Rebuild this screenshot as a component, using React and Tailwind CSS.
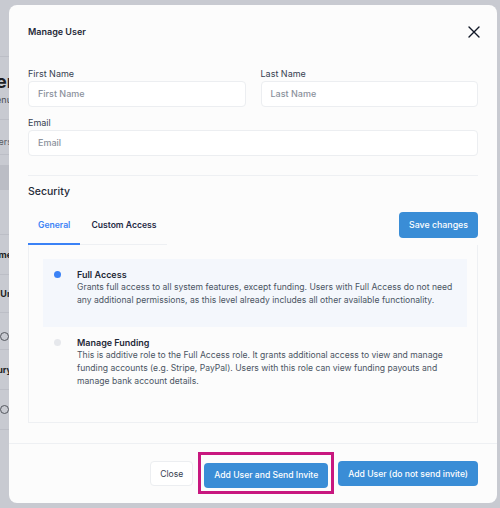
import React from "react";

function BgRow({ h, text, cls = "", border = true, band = false, icon = false }) {
  return (
    <div
      className={`flex items-center justify-end overflow-hidden whitespace-nowrap w-[12px] ${border ? "border-b border-[#bcbec6]" : ""} ${band ? "bg-[#bbbdc5]" : ""} ${cls}`}
      style={{ height: h }}
    >
      {icon ? (
        <span className="inline-block w-[9px] h-[9px] rounded-full border border-[#55585f] mr-[3px]"></span>
      ) : (
        text
      )}
    </div>
  );
}

function Field({ label, placeholder, className = "" }) {
  return (
    <div className={`flex flex-col ${className}`}>
      <label className="text-[9px] leading-[13px] text-[#374151] h-[13px]">{label}</label>
      <div className="mt-[0.5px] h-[26px] rounded-[4px] border border-[#eceef1] bg-white flex items-center pl-[9px] text-[9px] font-medium text-[#8b919c]">
        {placeholder}
      </div>
    </div>
  );
}

function Item({ active, title, children }) {
  return (
    <div className={`flex pt-[9px] pb-[20px] pl-[11px] pr-[10px] ${active ? "bg-[#f4f7fc]" : ""}`}>
      <div className="w-[23px] shrink-0 flex items-start pt-[3.5px]">
        <span className={`block w-[7px] h-[7px] rounded-full ${active ? "bg-[#3b82f6]" : "bg-[#e6e8ec]"}`}></span>
      </div>
      <div className="flex flex-col">
        <div className="text-[9px] leading-[13px] font-semibold text-[#1f2937]">{title}</div>
        <div className="text-[8.6px] leading-[13px] text-[#4b5563] whitespace-nowrap">{children}</div>
      </div>
    </div>
  );
}

export default function App() {
  return (
    <div className="relative w-[500px] h-[508px] overflow-hidden bg-[#c8cad1] font-['Inter',sans-serif]">
      {/* background page peeking on the left */}
      <div className="flex flex-col text-[#1c1d22]">
        <BgRow h={57} text="" />
        <BgRow h={63} border text={
          <div className="flex flex-col items-end">
            <span className="text-[18px] font-bold leading-[22px] mr-[-2px]">Member</span>
            <span className="text-[9px] leading-[12px] text-[#4a4c52] mt-[1px]">Menu</span>
          </div>
        } />
        <BgRow h={35} cls="!items-end pb-[6px]" text={<span className="text-[9px] leading-[12px] text-[#5a5c63]">Members</span>} />
        <BgRow h={10} text="" border={false} />
        <BgRow h={25} text="" band border={false} />
        <BgRow h={45} text="" />
        <BgRow h={40} text={<span className="text-[9px] font-bold">Name</span>} />
        <BgRow h={38} text={<span className="text-[9px] font-bold mr-[-3px]">Uni</span>} />
        <BgRow h={37} cls="!items-end pb-[8px]" icon />
        <BgRow h={40} text={<span className="text-[9px] font-bold">Treasury</span>} />
        <BgRow h={40} icon />
      </div>

      {/* modal */}
      <div className="absolute left-[9px] top-[5px] w-[488px] h-[498px] rounded-[8px] bg-[#fcfcfc] flex flex-col">
        <div className="flex items-center justify-between px-[19px] pt-[20px] h-[33px]">
          <span className="text-[9px] leading-[13px] font-semibold text-[#1f2937]">Manage User</span>
          <svg width="12" height="12" viewBox="0 0 12 12" className="mr-[-2px]">
            <path d="M1 1L11 11M11 1L1 11" stroke="#111827" strokeWidth="1.4" strokeLinecap="round" />
          </svg>
        </div>

        <div className="px-[19px] flex flex-col">
          <div className="flex gap-[15px] mt-[29px]">
            <Field className="flex-1" label="First Name" placeholder="First Name" />
            <Field className="flex-1" label="Last Name" placeholder="Last Name" />
          </div>
          <Field className="mt-[9.5px]" label="Email" placeholder="Email" />

          <div className="mt-[19px] border-t border-[#eef0f3]"></div>

          <div className="mt-[9px] text-[10.5px] leading-[14px] font-medium text-[#1f2937]">Security</div>

          <div className="flex items-end justify-between mt-[8px]">
            <div className="flex border-b border-[#eef0f3]">
              <div className="px-[10px] pt-[12px] pb-[11px] leading-[13px] text-[8.6px] font-semibold text-[#3b82f6] border-b-2 border-[#3b82f6] mb-[-1px]">
                General
              </div>
              <div className="px-[11px] pt-[12px] pb-[11px] leading-[13px] text-[8.6px] font-semibold text-[#1f2a44] border-b-2 border-transparent mb-[-1px]">
                Custom Access
              </div>
            </div>
            <button className="mb-[7px] h-[26px] px-[10px] rounded-[4px] bg-[#3a8dd6] text-white text-[8.8px] font-medium">
              Save changes
            </button>
          </div>

          <div className="border-l border-r border-b border-[#eef0f3] pl-[14px] pr-[10px] pt-[14px] pb-[14px] flex flex-col">
            <Item active title="Full Access">
              Grants full access to all system features, except funding. Users with Full Access do not need
              <br />
              any additional permissions, as this level already includes all other available functionality.
            </Item>
            <Item title="Manage Funding">
              This is additive role to the Full Access role. It grants additional access to view and manage
              <br />
              funding accounts (e.g. Stripe, PayPal). Users with this role can view funding payouts and
              <br />
              manage bank account details.
            </Item>
          </div>
        </div>

        <div className="mt-[20px] border-t border-[#eef0f3]"></div>

        <div className="flex justify-end items-center gap-[10px] px-[19px] pt-[16.5px]">
          <button className="h-[25px] px-[9px] rounded-[4px] border border-[#eceef1] bg-white text-[8.6px] text-[#374151]">
            Close
          </button>
          <div className="relative ml-[1px]">
            <button className="h-[25px] px-[10px] rounded-[4px] bg-[#3a8dd6] text-white text-[8.6px] font-medium">
              Add User and Send Invite
            </button>
            <span className="pointer-events-none absolute left-[-6px] right-[-6px] top-[-8px] bottom-[-6px] border-[3px] border-[#c8177f]"></span>
          </div>
          <button className="h-[25px] px-[10px] rounded-[4px] bg-[#3a8dd6] text-white text-[8.6px] font-medium">
            Add User (do not send invite)
          </button>
        </div>
      </div>
    </div>
  );
}
